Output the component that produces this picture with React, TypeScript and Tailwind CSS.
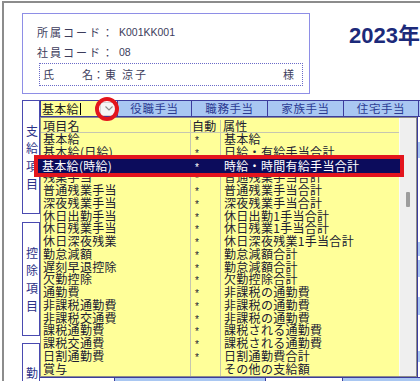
import React from "react";

const items: [string, boolean, string][] = [
  ["基本給", true, "基本給"],
  ["基本給(日給)", true, "日給・有給手当合計"],
  ["基本給(時給)", true, "時給・時間有給手当合計"],
  ["残業手当", true, "普通残業手当合計"],
  ["普通残業手当", true, "普通残業手当合計"],
  ["深夜残業手当", true, "深夜残業手当合計"],
  ["休日出勤手当", true, "休日出勤1手当合計"],
  ["休日残業手当", true, "休日残業1手当合計"],
  ["休日深夜残業", true, "休日深夜残業1手当合計"],
  ["勤怠減額", true, "勤怠減額合計"],
  ["遅刻早退控除", true, "勤怠減額合計"],
  ["欠勤控除", true, "欠勤控除合計"],
  ["通勤費", true, "非課税の通勤費"],
  ["非課税通勤費", true, "非課税の通勤費"],
  ["非課税交通費", true, "非課税の通勤費"],
  ["課税通勤費", true, "課税される通勤費"],
  ["課税交通費", true, "課税される通勤費"],
  ["日割通勤費", true, "日割通勤費合計"],
  ["賞与", false, "その他の支給額"],
];

const headers = [
  { label: "役職手当", w: "w-[74px]" },
  { label: "職務手当", w: "w-[76px]" },
  { label: "家族手当", w: "w-[76px]" },
  { label: "住宅手当", w: "w-[75px]" },
];

function InfoBox() {
  return (
    <div className="h-[81px] w-[296px] border border-[#8e8ee6] pl-[14px] pt-[11px] text-[11px] tracking-[2px] text-[#3c3c5c]">
      <div className="flex h-[14px] items-center leading-[14px]">
        <span>所属コード：</span>
        <span className="ml-[4px] font-['Liberation_Sans'] text-[10.5px] tracking-normal">K001KK001</span>
      </div>
      <div className="mt-[6px] flex h-[14px] items-center leading-[14px]">
        <span>社員コード：</span>
        <span className="ml-[4px] font-['Liberation_Sans'] text-[10.5px] tracking-normal">08</span>
      </div>
      <div className="ml-[2px] mt-[4px] flex h-[23px] w-[264px] items-center border border-dotted border-[#6a6ac8] pl-[3px] pr-[8px]">
        <span>氏</span>
        <span className="ml-[26px]">名</span>
        <span className="-ml-[2px]">：</span>
        <span className="ml-[-1px]">東</span>
        <span className="ml-[4px]">涼子</span>
        <span className="ml-auto tracking-normal">様</span>
      </div>
    </div>
  );
}

function SideBox({ chars, h, mt }: { chars: string[]; h: string; mt: string }) {
  return (
    <div className={`${h} ${mt} flex w-[18px] flex-col items-center justify-center border border-[#4a4ab0] pl-[2px] text-[12px] leading-[17.7px] text-[#2c3288]`}>
      {chars.map((c, i) => (
        <span key={i}>{c}</span>
      ))}
    </div>
  );
}

function Chevron() {
  return (
    <svg width="8" height="5" viewBox="0 0 8 5">
      <polyline points="0.5,0.5 4,4 7.5,0.5" fill="none" stroke="#8a8a8a" strokeWidth="1.1" />
    </svg>
  );
}

function PayTable() {
  return (
    <div className="ml-[18px] mt-[6px] flex">
      <div className="flex flex-col">
        <SideBox chars={["支", "給", "項", "目"]} h="h-[114px]" mt="mt-0" />
        <SideBox chars={["控", "除", "項", "目"]} h="h-[114px]" mt="mt-[8px]" />
        <div className="mt-[7px] flex h-[60px] w-[18px] flex-col items-center border border-[#4a4ab0] pl-[2px] pt-[22px] text-[12px] leading-[14px] text-[#2c3288]">
          <span>勤</span>
        </div>
      </div>
      <div className="flex flex-col">
        <div className="flex h-[17px] border-y border-[#3c3c9c]">
          <div className="flex w-[78px] items-center border-x border-[#3c3c9c]">
            <div className="flex h-full w-[58px] items-center bg-[#ffff99] pl-[1px] text-[12px] tracking-[0.3px] text-[#1a1a1a]">
              基本給
              <span className="ml-[1px] h-[12px] w-[1px] bg-black" />
            </div>
            <div className="ml-[1px] flex h-[14px] w-[17px] items-center justify-center rounded-[2px] border border-[#d4d4d4] bg-[#f6f6f6]">
              <Chevron />
            </div>
          </div>
          {headers.map((h) => (
            <div
              key={h.label}
              className={`${h.w} flex items-center justify-center border-r border-[#3c3c9c] bg-[#a9c7f2] text-[11.5px] tracking-[0.6px] text-[#2b3a92]`}
            >
              {h.label}
            </div>
          ))}
          <div className="w-[10px] bg-[#a9c7f2]" />
        </div>
        <div className="flex h-[260px]">
          <div className="w-[377px]" />
          <div className="flex w-[20px] flex-col border-l border-[#3c3c9c]">
            <div className="mt-[25px] h-[16px] bg-[#a9c7f2]" />
            <div className="mt-[84px] h-[14px] bg-[#a9c7f2]" />
            <div className="mt-[4px] h-[17px] bg-[#a9c7f2]" />
            <div className="mt-[20px] h-[18px] bg-[#a9c7f2]" />
            <div className="mt-[36px] h-[11px] bg-[#a9c7f2]" />
          </div>
        </div>
        <div className="flex h-[6px] border-t border-[#3c3c9c]">
          <div className="w-[75px] border-r border-[#3c3c9c]" />
          <div className="w-[150px] bg-[#a9c7f2]" />
          <div className="w-[78px] border-x border-[#3c3c9c]" />
          <div className="w-[80px] bg-[#a9c7f2]" />
        </div>
      </div>
    </div>
  );
}

function ItemList() {
  return (
    <div className="absolute left-[40px] top-[117px] flex h-[260px] w-[377px] border border-[#8c8c8c] text-[12px] tracking-[0.3px] text-[#202032]">
      <div className="flex w-[358px] bg-[#ffff99] pt-[2px]">
        <div className="flex w-[150px] flex-col border-r border-[#c6c6b0]">
          <div className="h-[13px] border-b border-[#c6c6b0] pl-[2px] leading-[12px]">項目名</div>
          {items.map((r, i) => (
            <div key={i} className="h-[12.75px] whitespace-nowrap pl-[2px] leading-[12.75px]">
              {r[0]}
            </div>
          ))}
        </div>
        <div className="flex w-[30px] flex-col border-r border-[#c6c6b0]">
          <div className="h-[13px] border-b border-[#c6c6b0] pl-[1px] leading-[12px]">自動</div>
          {items.map((r, i) => (
            <div key={i} className="h-[12.75px] pl-[4px] font-['Liberation_Sans'] text-[10px] leading-[12.75px]">
              <span className="inline-block translate-y-[2px]">{r[1] ? "*" : ""}</span>
            </div>
          ))}
        </div>
        <div className="flex flex-1 flex-col">
          <div className="h-[13px] border-b border-[#c6c6b0] pl-[2px] leading-[12px]">属性</div>
          {items.map((r, i) => (
            <div key={i} className="h-[12.75px] whitespace-nowrap pl-[3px] leading-[12.75px]">
              {r[2]}
            </div>
          ))}
        </div>
      </div>
      <div className="relative w-[17px] border-l border-[#fafafa] bg-[#efefef]">
        <div className="absolute left-[6px] top-[74px] h-[15px] w-[4px] rounded-[1px] bg-[#9d9d9d]" />
      </div>
    </div>
  );
}

export default function App() {
  return (
    <div className="relative h-[381px] w-[420px] overflow-hidden bg-white font-['Noto_Sans_CJK_JP',sans-serif]">
      <div className="ml-[2px] mt-[1px] h-[380px] border-l-2 border-t-2 border-[#8c8c8c]">
        <div className="flex pl-[18px] pt-[10px]">
          <InfoBox />
          <div className="ml-[39px] mt-[12px] whitespace-nowrap font-['Liberation_Sans','Noto_Sans_CJK_JP',sans-serif] text-[22px] font-bold leading-none text-[#1c2a7a]">
            2023年
          </div>
        </div>
        <PayTable />
      </div>
      <ItemList />
      {/* selected row, marked with a red frame */}
      <div className="absolute left-[34px] top-[155px] h-[22px] w-[370px] border-4 border-[#e3151d]">
        <div className="flex h-full bg-[#0c0c5c] text-[12px] tracking-[0.3px] text-white">
          <div className="w-[153px] pl-[4px] leading-[14px]">基本給(時給)</div>
          <div className="w-[30px] pl-[4px] font-['Liberation_Sans'] text-[10px] leading-[14px]">
            <span className="inline-block translate-y-[2px]">*</span>
          </div>
          <div className="pl-[3px] leading-[14px]">時給・時間有給手当合計</div>
        </div>
      </div>
      <div className="absolute left-[95px] top-[97px] h-[24px] w-[24px] rounded-full border-4 border-[#e3151d]" />
    </div>
  );
}
